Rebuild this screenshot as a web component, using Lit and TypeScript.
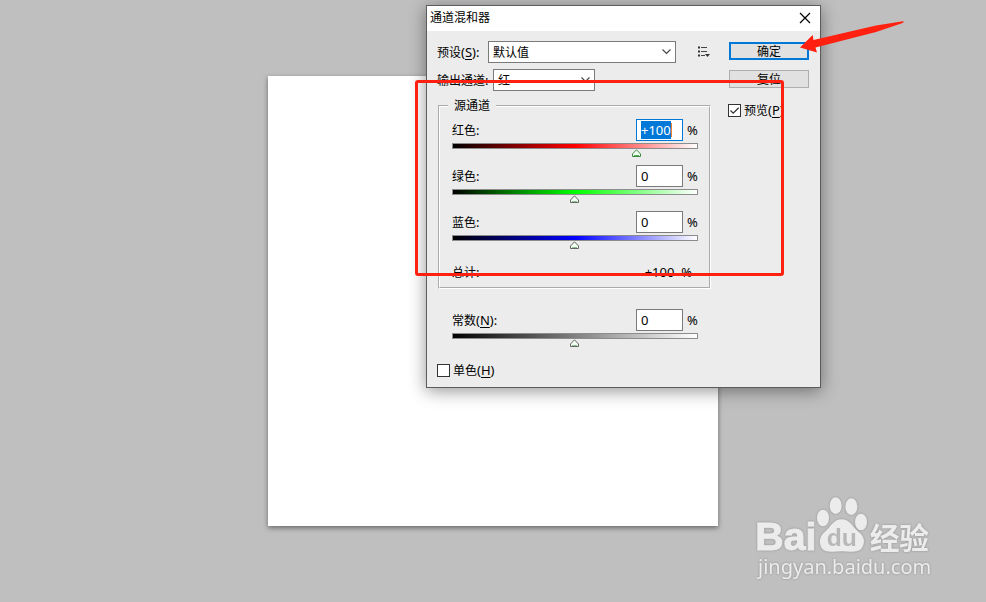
import { LitElement, html, css, svg } from "lit";
import { customElement, property, query, state } from "lit/decorators.js";

const control = css`
  * {
    box-sizing: border-box;
  }
  .latin {
    font-size: 13px;
  }
  u {
    text-underline-offset: 2px;
  }
`;

@customElement("channel-slider")
class ChannelSlider extends LitElement {
  @property() label = "";
  @property() mnemonic = "";
  @property() tone = "gray";
  @property({ type: Number }) value = 0;
  @property({ type: Boolean }) active = false;
  @query(".amount") amount!: HTMLInputElement;

  static styles = [
    control,
    css`
      :host {
        display: block;
        height: 46px;
      }
      .head {
        display: flex;
        align-items: center;
        height: 22px;
        line-height: 14px;
      }
      .name {
        flex: 1;
      }
      .amount {
        width: 47px;
        height: 22px;
        border: 1px solid #7a7a7a;
        border-radius: 0;
        padding: 0 4px;
        background: #fff;
        color: #000;
        font: 13px/15px "Noto Sans", sans-serif;
        outline: none;
      }
      .amount.active {
        border-color: #0078d7;
        background: linear-gradient(#f08030, #f08030) 34px center / 1px 14px no-repeat #fff;
      }
      .amount::selection {
        background: #0078d7;
        color: #fff;
      }
      .unit {
        width: 15px;
        padding-left: 4px;
        font-size: 13px;
      }
      .ramp {
        height: 6px;
        margin-top: 2px;
        border: 1px solid #8c8c8c;
      }
      .red {
        background: linear-gradient(90deg, #000, #f00, #fff);
      }
      .green {
        background: linear-gradient(90deg, #000, #0f0, #fff);
      }
      .blue {
        background: linear-gradient(90deg, #000, #00f, #fff);
      }
      .gray {
        background: linear-gradient(90deg, #000, #fff);
      }
      .range {
        display: block;
        appearance: none;
        width: calc(100% + 9px);
        height: 8px;
        margin: 0 -4px 0 -5px;
        background: none;
        outline: none;
      }
      .range::-webkit-slider-thumb {
        appearance: none;
        width: 9px;
        height: 8px;
        background: url("data:image/svg+xml,%3Csvg xmlns='http://www.w3.org/2000/svg' width='9' height='8'%3E%3Cpath d='M4.500 .8L8.500 5V7.500H.5V5Z' fill='%23f4fff4' stroke='%23606860'/%3E%3Cpath d='M2 6.500H7' stroke='%2390c090'/%3E%3C/svg%3E");
      }
      .range.active::-webkit-slider-thumb {
        background: url("data:image/svg+xml,%3Csvg xmlns='http://www.w3.org/2000/svg' width='9' height='8'%3E%3Cpath d='M4.500 .8L8.500 5V7.500H.5V5Z' fill='%23f4fff4' stroke='%23408a40'/%3E%3Cpath d='M2 6.500H7' stroke='%2350b850'/%3E%3C/svg%3E");
      }
    `,
  ];

  firstUpdated() {
    if (this.active) {
      this.amount.focus();
      this.amount.select();
    }
  }

  render() {
    const text = this.value > 0 ? `+${this.value}` : `${this.value}`;
    const mark = this.active ? "active" : "";
    return html`
      <div class="head">
        <label class="name" for="amount"
          >${this.label}<span class="latin"
            >${this.mnemonic ? html`(<u>${this.mnemonic}</u>)` : ""}:</span
          ></label
        >
        <input id="amount" class="amount ${mark}" type="text" .value=${text} />
        <span class="unit">%</span>
      </div>
      <div class="ramp ${this.tone}"></div>
      <input
        class="range ${mark}"
        type="range"
        min="-200"
        max="200"
        aria-label=${this.label}
        .value=${String(this.value)}
        @input=${(e: Event) => (this.value = Number((e.target as HTMLInputElement).value))}
      />
    `;
  }
}

@customElement("mixer-dialog")
class MixerDialog extends LitElement {
  @state() preview = true;

  static styles = [
    control,
    css`
      :host {
        box-sizing: border-box;
        display: block;
        border: 1px solid #5c5c5c;
        background: #ececec;
        color: #000;
        box-shadow: 0 3px 16px rgba(0, 0, 0, 0.42);
        font: 12px/16px "Noto Sans", "Noto Sans CJK SC", sans-serif;
      }
      .title {
        display: flex;
        align-items: center;
        justify-content: space-between;
        height: 25px;
        padding: 0 9px 2px 3px;
        background: #fff;
      }
      .close {
        display: flex;
        border: 0;
        padding: 0;
        background: none;
      }
      .body {
        display: flex;
        gap: 18px;
        padding: 10px 11px 8px;
      }
      .main {
        flex: 1;
        min-width: 0;
      }
      .row {
        display: flex;
        align-items: center;
        height: 22px;
        margin-bottom: 6px;
        white-space: nowrap;
      }
      .preset {
        width: 50px;
      }
      .output {
        width: 55px;
      }
      .row label {
        margin-left: -1px;
        padding-right: 1px;
        box-sizing: content-box;
      }
      select {
        appearance: none;
        height: 22px;
        border: 1px solid #7a7a7a;
        border-radius: 0;
        padding: 1px 4px 0;
        color: #000;
        font: inherit;
        background: #fff
          url("data:image/svg+xml,%3Csvg xmlns='http://www.w3.org/2000/svg' width='9' height='6'%3E%3Cpath d='M.5 .5L4.500 4.500L8.500 .5' fill='none' stroke='%23444' stroke-width='1.1'/%3E%3C/svg%3E")
          no-repeat right 4px center;
      }
      .wide {
        flex: 1;
      }
      .narrow {
        width: 102px;
      }
      .menu {
        display: flex;
        margin-left: 21px;
        border: 0;
        padding: 0;
        background: none;
      }
      fieldset {
        min-width: 0;
        margin: 0;
        border: 2px groove #fff;
        padding: 5px 11px 0 12px;
      }
      legend {
        margin-left: -4px;
        padding: 1px 6px 0;
      }
      .total {
        display: flex;
        align-items: center;
        justify-content: space-between;
        height: 30px;
        padding-right: 6px;
      }
      .sum {
        font-size: 13px;
        white-space: pre;
      }
      .constant {
        padding: 20px 13px 0 14px;
      }
      .check {
        display: flex;
        align-items: center;
        gap: 3px;
        height: 18px;
        margin-left: -1px;
        white-space: nowrap;
      }
      .mono {
        margin-top: 6px;
      }
      .check input {
        appearance: none;
        flex: none;
        width: 13px;
        height: 13px;
        margin: 0;
        border: 1px solid #333;
        background: #fff;
      }
      .check input:checked {
        background: #fff
          url("data:image/svg+xml,%3Csvg xmlns='http://www.w3.org/2000/svg' width='11' height='11'%3E%3Cpath d='M1.500 5.500L4.200 8.200L9.700 2.700' fill='none' stroke='%23333' stroke-width='1.3'/%3E%3C/svg%3E")
          center no-repeat;
      }
      .side {
        display: flex;
        flex-direction: column;
        gap: 10px;
        width: 80px;
        padding-top: 1px;
      }
      .button {
        height: 18px;
        border: 1px solid #adadad;
        border-radius: 0;
        padding: 2px 0 0;
        background: #e1e1e1;
        color: #000;
        font: inherit;
        line-height: 14px;
      }
      .primary {
        border: 2px solid #0078d7;
        line-height: 12px;
      }
      .preview {
        margin-top: 3px;
      }
    `,
  ];

  render() {
    return html`
      <div class="title">
        <span>通道混和器</span>
        <button class="close" aria-label="关闭">
          <svg width="12" height="12" viewBox="0 0 12 12">
            <path d="M1 1L11 11M11 1L1 11" stroke="#000" stroke-width="1.2" />
          </svg>
        </button>
      </div>
      <div class="body">
        <div class="main">
          <div class="row">
            <label class="preset" for="preset">预设<span class="latin">(<u>S</u>):</span></label>
            <select id="preset" class="wide">
              <option>默认值</option>
            </select>
            <button class="menu" aria-label="预设选项">
              <svg width="14" height="12" viewBox="0 0 14 12">
                <path d="M1 1.500H3M1 5.500H3M1 9.500H3" stroke="#333" stroke-width="2" />
                <path d="M4 1.500H10M4 5.500H10M4 9.500H8" stroke="#444" />
                <path d="M8 8H13L10.500 11Z" fill="#333" />
              </svg>
            </button>
          </div>
          <div class="row">
            <label class="output" for="output">输出通道<span class="latin">:</span></label>
            <select id="output" class="narrow">
              <option>红</option>
              <option>绿</option>
              <option>蓝</option>
            </select>
          </div>
          <fieldset>
            <legend>源通道</legend>
            <channel-slider label="红色" tone="red" .value=${100} active></channel-slider>
            <channel-slider label="绿色" tone="green"></channel-slider>
            <channel-slider label="蓝色" tone="blue"></channel-slider>
            <div class="total">
              <span>总计<span class="latin">:</span></span>
              <span class="sum">+100  %</span>
            </div>
          </fieldset>
          <div class="constant">
            <channel-slider label="常数" mnemonic="N" tone="gray"></channel-slider>
          </div>
          <label class="check mono">
            <input type="checkbox" />
            <span>单色<span class="latin">(<u>H</u>)</span></span>
          </label>
        </div>
        <div class="side">
          <button class="button primary">确定</button>
          <button class="button">复位</button>
          <label class="check preview">
            <input
              type="checkbox"
              .checked=${this.preview}
              @change=${() => (this.preview = !this.preview)}
            />
            <span>预览<span class="latin">(<u>P</u>)</span></span>
          </label>
        </div>
      </div>
    `;
  }
}

const toes = [
  [249, 114],
  [287, 77],
  [334, 80],
  [363, 126],
];

@customElement("app-root")
class AppRoot extends LitElement {
  static styles = css`
    :host {
      display: block;
      position: relative;
      min-height: 100vh;
      overflow: hidden;
      background: #bfbfbf;
    }
    .paper {
      position: absolute;
      left: 268px;
      top: 76px;
      width: 450px;
      height: 450px;
      background: #fff;
      box-shadow: 0 2px 5px rgba(0, 0, 0, 0.45);
    }
    .window {
      position: absolute;
      left: 426px;
      top: 5px;
      width: 395px;
    }
    .highlight {
      position: absolute;
      left: 415px;
      top: 80px;
      box-sizing: border-box;
      width: 369px;
      height: 196px;
      border: 3px solid #ff2010;
      border-radius: 3px;
    }
    .arrow {
      position: absolute;
      left: 800px;
      top: 20px;
    }
    .mark {
      position: absolute;
      right: 26px;
      bottom: 12px;
      filter: drop-shadow(0 0 1px rgba(0, 0, 0, 0.25));
    }
    .brand {
      font: bold 118px "Liberation Sans", sans-serif;
      fill: #ececec;
      stroke: #ececec;
      stroke-width: 3px;
    }
    .du {
      font: bold 74px "Liberation Sans", sans-serif;
      fill: #b8b8b8;
    }
    .cjk {
      font: bold 89px "Noto Sans CJK SC", sans-serif;
      fill: #ececec;
    }
    .site {
      font: 60px "Noto Sans", sans-serif;
      fill: #ececec;
    }
  `;

  render() {
    return html`
      <div class="paper"></div>
      <mixer-dialog class="window" role="dialog" aria-label="通道混和器"></mixer-dialog>
      <div class="highlight"></div>
      <svg class="arrow" width="106" height="34" viewBox="0 0 106 34">
        <path
          d="M0 27.500L12.700 15L13.500 20L76 5.500L103 1.300Q105 2 102 3.200L76 12L15.500 27.500L17 32.500Z"
          fill="#ff2010"
        />
      </svg>
      <svg class="mark" width="220" height="110" viewBox="0 0 660 330">
        <text class="brand" x="46" y="211">Bai</text>
        ${toes.map(([x, y]) => svg`<ellipse cx=${x} cy=${y} rx="18" ry="25" fill="#ececec" />`)}
        <path
          d="M305 118C330 118 338 142 356 156C372 168 376 184 368 200C360 216 342 217 305 214C268 217 250 216 243 200C236 184 240 168 254 156C272 142 280 118 305 118Z"
          fill="#ececec"
        />
        <text class="du" x="260" y="199">du</text>
        <text class="cjk" x="389" y="206">经验</text>
        <text class="site" x="54" y="281">jingyan.baidu.com</text>
      </svg>
    `;
  }
}
